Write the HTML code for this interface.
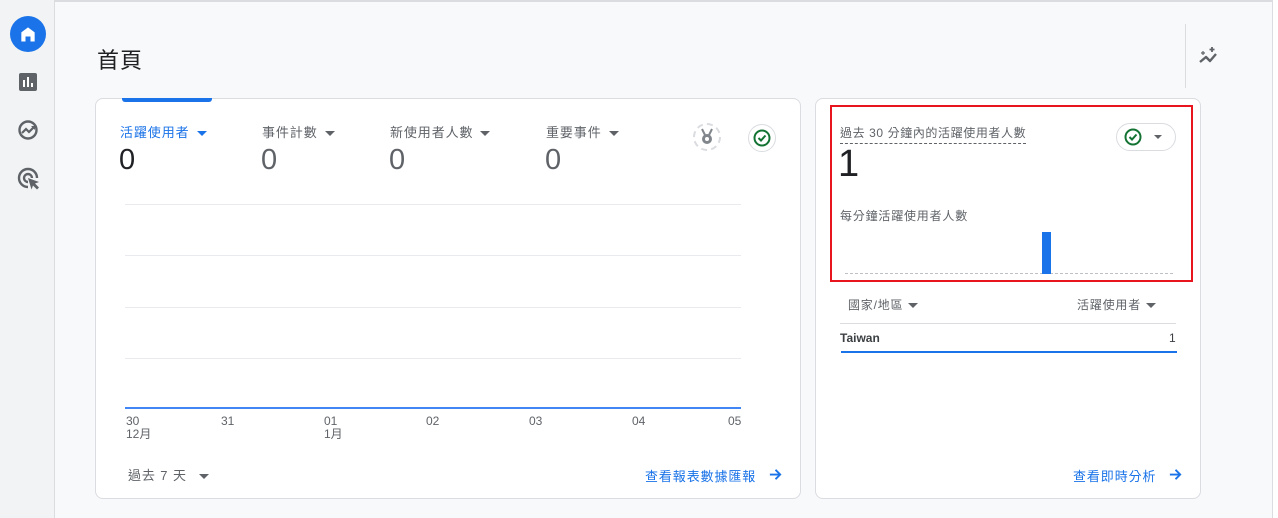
<!DOCTYPE html>
<html><head><meta charset="utf-8"><style>
*{margin:0;padding:0;box-sizing:border-box}
body{width:1278px;height:518px;overflow:hidden;background:#f8f9fa;font-family:"Liberation Sans","Noto Sans CJK TC",sans-serif;position:relative;color:#5f6368}
.a{position:absolute;white-space:nowrap}
.card{position:absolute;background:#fff;border:1px solid #dadce0;border-radius:8px}
.t{font-size:13px;color:#5f6368;letter-spacing:0.9px}
.tri{display:inline-block;width:0;height:0;border-left:5px solid transparent;border-right:5px solid transparent;border-top:5px solid #5f6368;vertical-align:middle;margin-left:7px}
.big{font-size:29px;color:#5f6368}
.gl{position:absolute;left:125px;width:616px;height:1px;background:#e8eaed}
.d{font-size:12px;color:#5f6368;line-height:13px}
.s{font-size:12px;letter-spacing:0.8px}
</style></head><body>
<div class="a" style="left:0;top:0;width:1278px;height:2px;background:#dadce0"></div>
<div class="a" style="left:0;top:0;width:55px;height:518px;background:#f1f3f4;border-right:1px solid #dadce0"></div>
<div class="a" style="left:1272px;top:0;width:6px;height:518px;background:#fff;border-left:1px solid #dadce0"></div>
<div class="a" style="left:10px;top:16px;width:36px;height:36px;border-radius:50%;background:#1a73e8"></div>
<svg class="a" style="left:18px;top:24px" width="20" height="20" viewBox="0 0 24 24"><path d="M4 21V10l8-6 8 6v11h-5v-6H9v6z" fill="#fff"/></svg>
<svg class="a" style="left:18px;top:72px" width="20" height="20" viewBox="0 0 20 20"><rect x="1" y="1" width="18" height="18" rx="2" fill="#5f6368"/><rect x="5" y="8" width="2" height="7" fill="#fff"/><rect x="9" y="5" width="2" height="10" fill="#fff"/><rect x="13" y="11" width="2" height="4" fill="#fff"/></svg>
<svg class="a" style="left:17px;top:119px" width="22" height="22" viewBox="0 0 22 22"><circle cx="11" cy="11" r="8.5" fill="none" stroke="#5f6368" stroke-width="2.4"/><path d="M5 14l4-4 3 3 5-5" fill="none" stroke="#5f6368" stroke-width="2.2"/><path d="M14 7h4v4z" fill="#5f6368"/></svg>
<svg class="a" style="left:17px;top:167px" width="24" height="24" viewBox="0 0 24 24"><path d="M11 20a9 9 0 1 1 9-9" fill="none" stroke="#5f6368" stroke-width="2.4"/><path d="M11 15a4 4 0 1 1 4-4" fill="none" stroke="#5f6368" stroke-width="2.4"/><path d="M11 11l11 4-4 1.5 4 4-2 2-4-4-1.5 4z" fill="#5f6368"/></svg>
<div class="a" style="left:97px;top:43px;font-size:22px;color:#202124;letter-spacing:1px">首頁</div>
<div class="a" style="left:1185px;top:24px;width:1px;height:64px;background:#dadce0"></div>
<svg class="a" style="left:1198px;top:46px" width="24" height="20" viewBox="0 0 24 20"><path d="M2 16l6-5 4 4 6-7" fill="none" stroke="#5f6368" stroke-width="2.4" stroke-linejoin="round"/><path d="M5 5v4M3 7h4" stroke="#5f6368" stroke-width="1.2"/><path d="M14 1v5M11.5 3.5h5" stroke="#5f6368" stroke-width="1.8"/></svg>
<div class="card" style="left:95px;top:98px;width:706px;height:401px"></div>
<div class="a" style="left:122px;top:98px;width:90px;height:4px;background:#1a73e8;border-radius:0 0 3px 3px"></div>
<div class="a t" style="left:120px;top:122px;color:#1a73e8">活躍使用者<span class="tri" style="border-top-color:#1a73e8"></span></div>
<div class="a t" style="left:262px;top:122px">事件計數<span class="tri"></span></div>
<div class="a t" style="left:390px;top:122px">新使用者人數<span class="tri"></span></div>
<div class="a t" style="left:546px;top:122px">重要事件<span class="tri"></span></div>
<div class="a big" style="left:119px;top:144px;color:#202124">0</div>
<div class="a big" style="left:261px;top:144px">0</div>
<div class="a big" style="left:389px;top:144px">0</div>
<div class="a big" style="left:545px;top:144px">0</div>
<div class="a" style="left:693px;top:123px;width:28px;height:28px;border-radius:50%;border:2px dashed #dadce0"></div>
<svg class="a" style="left:699px;top:128px" width="16" height="18" viewBox="0 0 16 18"><path d="M3 1l3 6M13 1l-3 6" stroke="#80868b" stroke-width="2"/><circle cx="8" cy="11" r="5" fill="#80868b"/><circle cx="8" cy="11" r="2" fill="#fff"/></svg>
<div class="a" style="left:748px;top:124px;width:28px;height:28px;border-radius:50%;border:1px solid #dadce0;background:#fff"></div>
<svg class="a" style="left:753px;top:129px" width="18" height="18" viewBox="0 0 18 18"><circle cx="9" cy="9" r="7.5" fill="none" stroke="#137333" stroke-width="2"/><path d="M5.5 9l2.5 2.5 4.5-5" fill="none" stroke="#137333" stroke-width="2"/></svg>
<div class="gl" style="top:204px"></div><div class="gl" style="top:255px"></div><div class="gl" style="top:307px"></div><div class="gl" style="top:358px"></div>
<div class="a" style="left:125px;top:407px;width:616px;height:2px;background:#4285f4"></div>
<div class="a d" style="left:126px;top:415px">30<br>12月</div>
<div class="a d" style="left:221px;top:415px">31</div>
<div class="a d" style="left:324px;top:415px">01<br>1月</div>
<div class="a d" style="left:426px;top:415px">02</div>
<div class="a d" style="left:529px;top:415px">03</div>
<div class="a d" style="left:632px;top:415px">04</div>
<div class="a d" style="left:728px;top:415px">05</div>
<div class="a t" style="left:128px;top:465px">過去 7 天<span class="tri" style="margin-left:12px"></span></div>
<div class="a t" style="left:645px;top:466px;color:#1a73e8">查看報表數據匯報</div>
<svg class="a" style="left:768px;top:467px" width="15" height="15" viewBox="0 0 16 16"><path d="M2 8h11M8 3l5 5-5 5" fill="none" stroke="#1a73e8" stroke-width="2"/></svg>
<div class="card" style="left:815px;top:98px;width:386px;height:401px"></div>
<div class="a" style="left:830px;top:105px;width:363px;height:177px;border:2px solid #e8141e"></div>
<div class="a s" style="left:840px;top:124px;color:#5f6368;border-bottom:1px dashed #5f6368;padding-bottom:2px;letter-spacing:0.6px">過去 30 分鐘內的活躍使用者人數</div>
<div class="a" style="left:1116px;top:123px;width:60px;height:28px;border-radius:14px;border:1px solid #dadce0"></div>
<svg class="a" style="left:1124px;top:128px" width="18" height="18" viewBox="0 0 18 18"><circle cx="9" cy="9" r="7.5" fill="none" stroke="#137333" stroke-width="2"/><path d="M5.5 9l2.5 2.5 4.5-5" fill="none" stroke="#137333" stroke-width="2"/></svg>
<div class="a" style="left:1154px;top:135px;border-left:4px solid transparent;border-right:4px solid transparent;border-top:4px solid #5f6368"></div>
<div class="a" style="left:838px;top:143px;font-size:38px;color:#202124">1</div>
<div class="a s" style="left:840px;top:207px">每分鐘活躍使用者人數</div>
<div class="a" style="left:845px;top:273px;width:328px;height:0;border-top:1px dashed #bdc1c6"></div>
<div class="a" style="left:1042px;top:232px;width:9px;height:42px;background:#1a73e8"></div>
<div class="a s" style="left:848px;top:296px">國家/地區<span class="tri" style="margin-left:5px"></span></div>
<div class="a s" style="left:1077px;top:296px">活躍使用者<span class="tri" style="margin-left:5px"></span></div>
<div class="a" style="left:840px;top:323px;width:336px;height:1px;background:#dadce0"></div>
<div class="a" style="left:840px;top:331px;font-size:12px;font-weight:bold;color:#3c4043">Taiwan</div>
<div class="a" style="left:1169px;top:331px;font-size:12px;color:#3c4043">1</div>
<div class="a" style="left:841px;top:351px;width:336px;height:2px;background:#1a73e8"></div>
<div class="a t" style="left:1073px;top:466px;color:#1a73e8">查看即時分析</div>
<svg class="a" style="left:1168px;top:467px" width="15" height="15" viewBox="0 0 16 16"><path d="M2 8h11M8 3l5 5-5 5" fill="none" stroke="#1a73e8" stroke-width="2"/></svg>
</body></html>
